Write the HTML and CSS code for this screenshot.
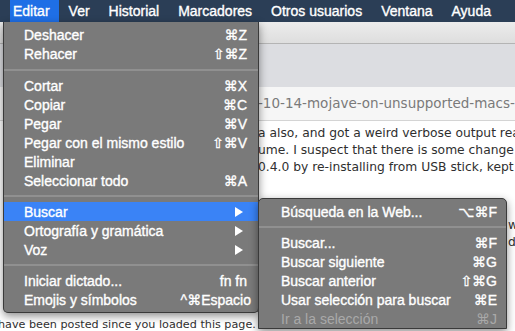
FILE: index.html
```html
<!DOCTYPE html>
<html lang="es">
<head>
  <meta charset="UTF-8">
  <title>Editar</title>
  <link rel="stylesheet" href="styles.css">
</head>
<body>

<div class="screen">
  <nav class="menubar">
    <span class="mb-item active">Editar</span>
    <span class="mb-item">Ver</span>
    <span class="mb-item">Historial</span>
    <span class="mb-item">Marcadores</span>
    <span class="mb-item">Otros usuarios</span>
    <span class="mb-item">Ventana</span>
    <span class="mb-item">Ayuda</span>
  </nav>

  <div class="toolbar"></div>
  <div class="tabbar"></div>
  <div class="urlbar">
    <span class="url">-10-14-mojave-on-unsupported-macs-thread.2121473/page-1024</span>
  </div>

  <main class="content">
    <div class="post">
      <p>a also, and got a weird verbose output reading</p>
      <p>ume. I suspect that there is some change in</p>
      <p>0.4.0 by re-installing from USB stick, kept the</p>
    </div>
    <div class="post-edge">
      <p>w</p>
      <p>d</p>
    </div>
    <div class="notice">have been posted since you loaded this page.</div>
  </main>

  <!-- Editar menu -->
  <div class="menu main-menu">
    <div class="row"><span>Deshacer</span><span class="key">⌘Z</span></div>
    <div class="row"><span>Rehacer</span><span class="key">⇧⌘Z</span></div>
    <div class="sep"></div>
    <div class="row"><span>Cortar</span><span class="key">⌘X</span></div>
    <div class="row"><span>Copiar</span><span class="key">⌘C</span></div>
    <div class="row"><span>Pegar</span><span class="key">⌘V</span></div>
    <div class="row"><span>Pegar con el mismo estilo</span><span class="key">⇧⌘V</span></div>
    <div class="row"><span>Eliminar</span></div>
    <div class="row"><span>Seleccionar todo</span><span class="key">⌘A</span></div>
    <div class="sep sep-tight"></div>
    <div class="row selected"><span>Buscar</span><span class="arrow"></span></div>
    <div class="row"><span>Ortografía y gramática</span><span class="arrow"></span></div>
    <div class="row"><span>Voz</span><span class="arrow"></span></div>
    <div class="sep sep-tight"></div>
    <div class="row"><span>Iniciar dictado...</span><span class="key">fn fn</span></div>
    <div class="row"><span>Emojis y símbolos</span><span class="key key-wide">^⌘Espacio</span></div>
  </div>

  <!-- Buscar submenu -->
  <div class="menu sub-menu">
    <div class="row"><span>Búsqueda en la Web...</span><span class="key">⌥⌘F</span></div>
    <div class="sep sep-tight"></div>
    <div class="row"><span>Buscar...</span><span class="key">⌘F</span></div>
    <div class="row"><span>Buscar siguiente</span><span class="key">⌘G</span></div>
    <div class="row"><span>Buscar anterior</span><span class="key">⇧⌘G</span></div>
    <div class="row"><span>Usar selección para buscar</span><span class="key">⌘E</span></div>
    <div class="row disabled"><span>Ir a la selección</span><span class="key">⌘J</span></div>
  </div>
</div>

</body>
</html>
```

FILE: styles.css
```css
body {
  margin: 0;
  font-family: "Liberation Sans", Arial, sans-serif;
  background: #ffffff;
}

.screen {
  position: relative;
  width: 515px;
  height: 331px;
  overflow: hidden;
  background: #ffffff;
}

/* top menu bar */

.menubar {
  display: flex;
  height: 22px;
  padding-left: 10px;
  background-color: #2b3e56;
  color: #ffffff;
  font-size: 14px;
  line-height: 22px;
  -webkit-text-stroke: 0.35px #ffffff;
}

.mb-item {
  padding: 0 9.5px;
  white-space: nowrap;
}

.mb-item.active {
  padding-left: 3px;
  padding-right: 9px;
  margin-right: 0.5px;
  background-color: #1f6fe6;
}

/* browser window behind the menu */

.toolbar {
  height: 21px;
  background: linear-gradient(#ececec, #dedede);
  border-bottom: 1px solid #b4b4b4;
}

.tabbar {
  height: 43px;
  background-color: #dcdde1;
}

.urlbar {
  height: 33px;
  padding-left: 258px;
  background-color: #f6f6f6;
  border-bottom: 1px solid #d4d4d4;
  font-family: "DejaVu Sans", sans-serif;
  font-size: 13.5px;
  line-height: 33px;
  color: #7a7a7a;
  white-space: nowrap;
  overflow: hidden;
}

.content {
  font-family: "DejaVu Sans", sans-serif;
  color: #2f2f2f;
}

.post {
  padding: 4px 0 0 258px;
  font-size: 12.3px;
  line-height: 17px;
  white-space: nowrap;
  overflow: hidden;
}

.post p,
.post-edge p {
  margin: 0;
}

.post-edge {
  margin-top: 41px;
  padding-left: 508px;
  font-size: 12.3px;
  line-height: 17px;
}

.notice {
  margin-top: 67px;
  margin-left: -2px;
  font-size: 11.2px;
  line-height: 14px;
  white-space: nowrap;
}

/* menus */

.menu {
  position: absolute;
  box-sizing: border-box;
  background-color: #7a7a7a;
  border: 1px solid #3a3a3a;
  color: #ffffff;
  font-size: 14px;
  box-shadow: 0 3px 8px rgba(0, 0, 0, 0.45);
  -webkit-text-stroke: 0.35px #ffffff;
}

.main-menu {
  left: 3px;
  top: 22px;
  width: 256px;
  padding: 3px 0 3px;
  border-top: none;
  border-radius: 0 0 5px 5px;
}

.sub-menu {
  left: 258px;
  top: 198px;
  width: 249px;
  padding-top: 3px;
  border-radius: 5px 5px 0 0;
  z-index: 2;
}

.row {
  display: flex;
  justify-content: space-between;
  align-items: center;
  height: 19px;
  padding: 0 11px 0 20px;
  white-space: nowrap;
}

.sub-menu .row {
  padding: 0 9px 0 22px;
}

.row.selected {
  background-color: #3a83f6;
}

.row.disabled {
  color: #a9a9a9;
  -webkit-text-stroke: 0;
}

.key {
  font-family: "Liberation Sans", "DejaVu Sans", sans-serif;
}

.key-wide {
  margin-right: -4px;
}

.arrow {
  width: 0;
  height: 0;
  margin-right: 4px;
  border-left: 8px solid #ffffff;
  border-top: 5px solid transparent;
  border-bottom: 5px solid transparent;
}

.sep {
  height: 13px;
  display: flex;
  align-items: center;
}

.sep::after {
  content: "";
  flex: 1;
  height: 2px;
  background-color: #909090;
}

.sep-tight {
  height: 12px;
}
```
